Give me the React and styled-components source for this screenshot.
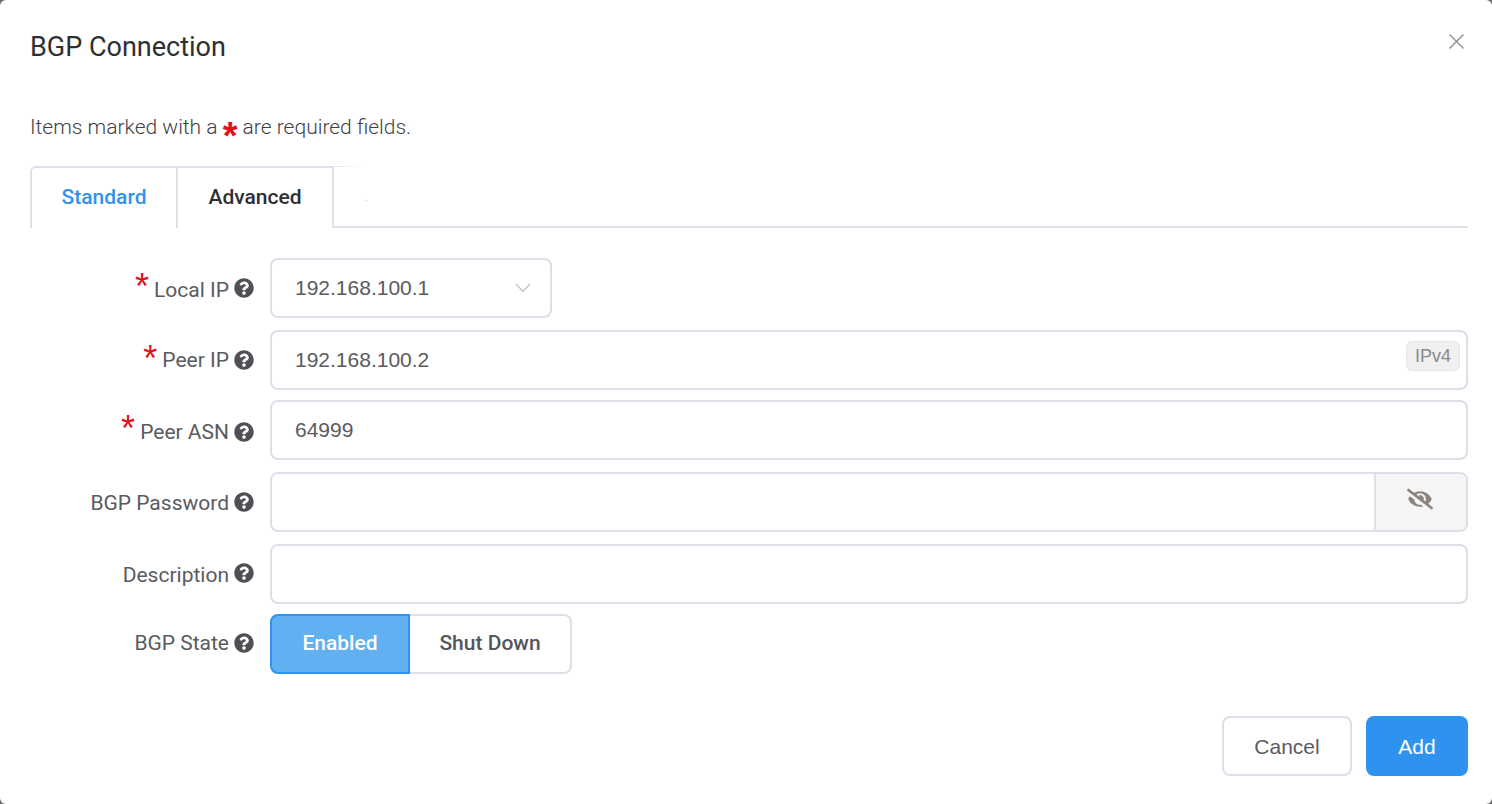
import React from "react";
import styled, { createGlobalStyle } from "styled-components";
import { FaQuestionCircle, FaEyeSlash } from "react-icons/fa";

const GlobalStyle = createGlobalStyle`
	html, body {
		margin: 0;
		padding: 0;
		background: #6b6b6b;
	}
`;

const Dialog = styled.div`
	box-sizing: border-box;
	position: relative;
	width: 1492px;
	height: 804px;
	padding: 0 24px 0 30px;
	background: #fff;
	border-radius: 6px;
	overflow: hidden;
	font-family: Roboto, "Liberation Sans", sans-serif;
	color: #55565b;
`;

const Title = styled.h2`
	margin: 0;
	padding-top: 29px;
	font-size: 27px;
	line-height: 36px;
	font-weight: 400;
	color: #2e2f33;
`;

const CloseButton = styled.button`
	position: absolute;
	top: 33px;
	right: 27px;
	width: 17px;
	height: 17px;
	padding: 0;
	border: 0;
	background: none;
	display: block;
`;

const Note = styled.p`
	margin: 0;
	padding-top: 48px;
	font-size: 21px;
	line-height: 28px;
	font-weight: 300;
	color: #3f4045;
`;

const NoteStar = styled.span`
	font-family: "Liberation Sans", sans-serif;
	font-size: 38px;
	line-height: 0;
	font-weight: 700;
	color: #e0101f;
	position: relative;
	top: 15px;
`;

const Tabs = styled.div`
	display: flex;
	height: 62px;
	margin-top: 25px;
	box-sizing: border-box;
	border-bottom: 2px solid #dfe1ea;
`;

const Tab = styled.div`
	box-sizing: border-box;
	display: flex;
	align-items: center;
	justify-content: center;
	width: ${(p) => p.$width}px;
	height: 62px;
	padding-bottom: 2px;
	border-top: 2px solid #dfe1ea;
	border-right: 2px solid #dfe1ea;
	border-left: ${(p) => (p.$active ? "2px solid #dfe1ea" : "0")};
	border-radius: ${(p) => (p.$active ? "6px 0 0 0" : "0")};
	background: #fff;
	font-size: 21px;
	font-weight: 500;
	color: ${(p) => (p.$active ? "#2e93ee" : "#2e2f33")};
`;

const GhostTab = styled.div`
	position: relative;
	width: 64px;
	padding-top: 24px;
	text-align: center;
	font-size: 12px;
	color: #c9c9c9;

	&::before {
		content: "";
		position: absolute;
		top: 0;
		left: 0;
		right: 34px;
		height: 1px;
		background: linear-gradient(to right, #e4e6ee, #fff);
	}
`;

const Form = styled.div`
	padding-top: 30px;
`;

const Row = styled.div`
	display: flex;
	align-items: center;
	height: 60px;
	margin-bottom: ${(p) => p.$gap}px;
`;

const Label = styled.label`
	box-sizing: border-box;
	flex: 0 0 240px;
	display: flex;
	align-items: center;
	justify-content: flex-end;
	padding-right: 16px;
	font-size: 21px;
	line-height: 28px;
	color: #5a5b60;
`;

const LabelText = styled.span`
	position: relative;
	top: ${(p) => p.$shift || 0}px;
`;

const Star = styled.span`
	font-size: 36px;
	line-height: 20px;
	height: 20px;
	margin-right: 5px;
	color: #e0101f;
	position: relative;
	top: -1px;
	font-family: "Liberation Sans", sans-serif;
`;

const Help = styled(FaQuestionCircle)`
	width: 20px;
	height: 20px;
	margin-left: 5px;
	color: #4f5055;
	position: relative;
	top: ${(p) => p.$shift || 0}px;
`;

const Field = styled.div`
	box-sizing: border-box;
	display: flex;
	align-items: center;
	position: relative;
	height: 60px;
	flex: ${(p) => (p.$narrow ? "0 0 282px" : "1")};
	padding-left: 23px;
	border: 2px solid #dcdee9;
	border-radius: 8px;
	background: #fff;
	font-family: "Liberation Sans", sans-serif;
	font-size: 21px;
	color: #5a5b60;
`;

const Chevron = styled.svg`
	position: absolute;
	right: 19px;
	top: 23px;
	width: 16px;
	height: 10px;
`;

const Badge = styled.span`
	position: absolute;
	top: 9px;
	right: 6px;
	box-sizing: border-box;
	height: 30px;
	width: 54px;
	display: flex;
	align-items: center;
	justify-content: center;
	background: #f0f0f0;
	border: 1px solid #e6e6e6;
	border-radius: 6px;
	font-size: 18px;
	color: #8c8a87;
`;

const Addon = styled.div`
	box-sizing: border-box;
	position: absolute;
	top: 0;
	right: 0;
	bottom: 0;
	width: 92px;
	padding: 0 2px 6px 0;
	display: flex;
	align-items: center;
	justify-content: center;
	background: #f5f5f5;
	border-left: 2px solid #dcdee9;
	border-radius: 0 6px 6px 0;
	color: #8a847d;
`;

const Toggle = styled.div`
	display: flex;
	height: 60px;
`;

const ToggleButton = styled.button`
	box-sizing: border-box;
	width: ${(p) => p.$width}px;
	height: 60px;
	padding: 0 0 2px;
	font-family: Roboto, sans-serif;
	font-size: 21px;
	font-weight: 500;
	background: ${(p) => (p.$on ? "#60b0f2" : "#fff")};
	color: ${(p) => (p.$on ? "#fff" : "#55565b")};
	border: 2px solid ${(p) => (p.$on ? "#2e93ee" : "#dcdee9")};
	border-left-width: ${(p) => (p.$on ? 2 : 0)}px;
	border-radius: ${(p) => (p.$on ? "8px 0 0 8px" : "0 8px 8px 0")};
`;

const Footer = styled.div`
	display: flex;
	justify-content: flex-end;
	gap: 14px;
	padding-top: 42px;
`;

const ActionButton = styled.button`
	box-sizing: border-box;
	width: ${(p) => p.$width}px;
	height: 60px;
	padding: 2px 0 0;
	font-family: "Liberation Sans", sans-serif;
	font-size: 21px;
	border-radius: 8px;
	background: ${(p) => (p.$primary ? "#2e93ee" : "#fff")};
	color: ${(p) => (p.$primary ? "#fff" : "#5a5b60")};
	border: ${(p) => (p.$primary ? "0" : "2px solid #dcdee9")};
`;

function FieldLabel({ required, shift, helpShift, children }) {
	return (
		<Label>
			{required && <Star>*</Star>}
			<LabelText $shift={shift}>{children}</LabelText>
			<Help $shift={helpShift} />
		</Label>
	);
}

export default function App() {
	return (
		<Dialog>
			<GlobalStyle />
			<Title>BGP Connection</Title>
			<CloseButton aria-label="Close">
				<svg width="17" height="17" viewBox="0 0 17 17" fill="none" stroke="#8a8a8a" strokeWidth="1.3">
					<path d="M1.5 1.5 L15.5 15.5 M15.5 1.5 L1.5 15.5" />
				</svg>
			</CloseButton>
			<Note>
				Items marked with a <NoteStar>*</NoteStar> are required fields.
			</Note>
			<Tabs>
				<Tab $active $width={148}>Standard</Tab>
				<Tab $width={156}>Advanced</Tab>
				<GhostTab>.</GhostTab>
			</Tabs>
			<Form>
				<Row $gap={12}>
					<FieldLabel required shift={2}>Local IP</FieldLabel>
					<Field $narrow>
						192.168.100.1
						<Chevron viewBox="0 0 16 10" fill="none" stroke="#b9bbc2" strokeWidth="1.1">
							<path d="M1 1 L8 8.5 L15 1" />
						</Chevron>
					</Field>
				</Row>
				<Row $gap={10}>
					<FieldLabel required>Peer IP</FieldLabel>
					<Field>
						192.168.100.2
						<Badge>IPv4</Badge>
					</Field>
				</Row>
				<Row $gap={12}>
					<FieldLabel required shift={2} helpShift={2}>Peer ASN</FieldLabel>
					<Field>64999</Field>
				</Row>
				<Row $gap={12}>
					<FieldLabel shift={1}>BGP Password</FieldLabel>
					<Field>
						<Addon>
							<FaEyeSlash size={26} />
						</Addon>
					</Field>
				</Row>
				<Row $gap={10}>
					<FieldLabel shift={1} helpShift={-1}>Description</FieldLabel>
					<Field />
				</Row>
				<Row $gap={0}>
					<FieldLabel shift={-1} helpShift={-1}>BGP State</FieldLabel>
					<Toggle>
						<ToggleButton $on $width={140}>Enabled</ToggleButton>
						<ToggleButton $width={162}>Shut Down</ToggleButton>
					</Toggle>
				</Row>
			</Form>
			<Footer>
				<ActionButton $width={130}>Cancel</ActionButton>
				<ActionButton $primary $width={102}>Add</ActionButton>
			</Footer>
		</Dialog>
	);
}
